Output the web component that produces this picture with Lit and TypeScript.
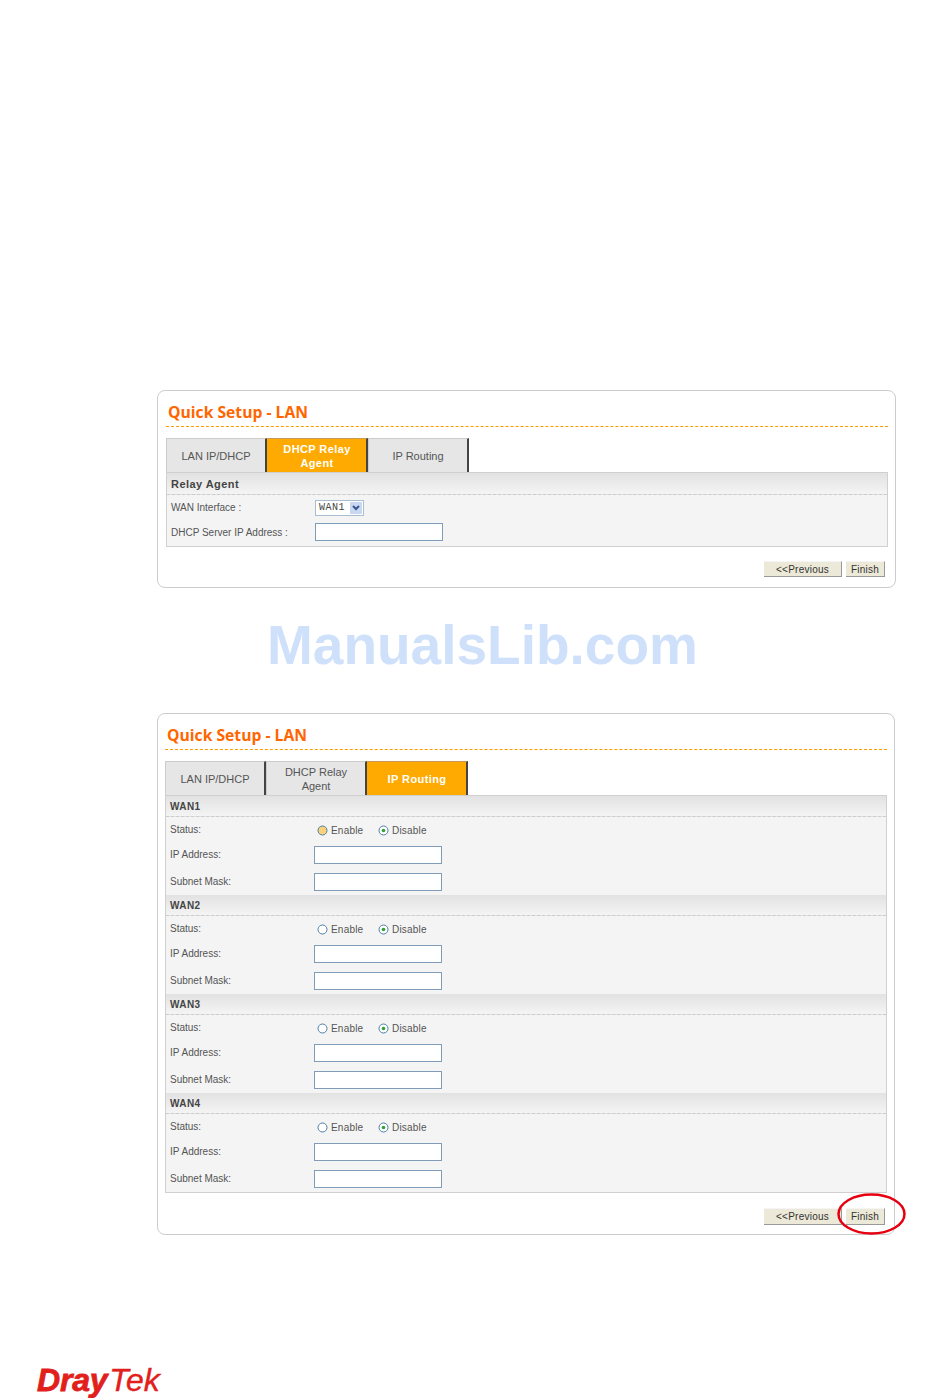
import { LitElement, html, css, svg } from "lit";
import { customElement, property } from "lit/decorators.js";

const TABS = ["LAN IP/DHCP", "DHCP Relay<br>Agent", "IP Routing"];

@customElement("setup-panel")
class SetupPanel extends LitElement {
  @property({ type: Number }) active = 0;
  @property({ type: Boolean }) routing = false;

  static styles = css`
    :host { display: block; position: relative; }
    .panel {
      box-sizing: border-box;
      border: 1px solid #ccc;
      border-radius: 8px;
      background: #fff;
      padding: 0 7px;
      font-family: "Liberation Sans", sans-serif;
      font-size: 10px;
      color: #555;
    }
    .title {
      font-family: "Open Sans", sans-serif;
      font-weight: 700;
      font-size: 15.7px;
      line-height: 26px;
      padding: 8px 0 1px 2px;
      color: #f60;
      border-bottom: 1px dashed #f90;
    }
    .tabs { display: flex; margin-top: 11px; }
    .tab {
      box-sizing: border-box;
      width: 101px;
      height: 34px;
      padding-top: 1px;
      display: flex;
      align-items: center;
      justify-content: center;
      text-align: center;
      font-size: 11px;
      line-height: 14px;
      background: #e6e6e6;
      color: #555;
      border-top: 1px solid #ccc;
      border-left: 1px solid #ccc;
      border-right: 2px solid #444;
    }
    .tab.on {
      background: #fa0;
      color: #fff;
      font-weight: 700;
      letter-spacing: 0.4px;
      border-top-color: #c89a55;
      border-left-color: #fa0;
    }
    .shift .title, .shift .tabs, .shift .box { margin-left: 1px; }
    .box {
      background: #f4f4f4;
      border: 1px solid #d0d0d0;
    }
    .head {
      box-sizing: border-box;
      height: 21px;
      line-height: 22px;
      padding-left: 4px;
      font-size: 10px;
      font-weight: 700;
      letter-spacing: 0.4px;
      color: #444;
      background: linear-gradient(#e2e2e2, #f4f4f4);
      border-bottom: 1px dashed #ccc;
    }
    .head.big { height: 22px; font-size: 11px; line-height: 23px; letter-spacing: 0.45px; }
    .row {
      display: grid;
      grid-template-columns: 144px 1fr;
      align-items: center;
      padding-left: 4px;
      box-sizing: border-box;
      color: #555;
    }
    .r24 { height: 24px; }
    .r25 { height: 25px; }
    .r26 { height: 26px; padding-bottom: 2px; }
    .r27 { height: 27px; }
    .field {
      box-sizing: border-box;
      display: block;
      width: 128px;
      height: 18px;
      border: 1px solid #7f9db9;
      background: #fff;
    }
    .select {
      box-sizing: border-box;
      width: 49px;
      height: 16px;
      border: 1px solid #a9bdd3;
      background: #fff;
      display: flex;
      align-items: center;
      justify-content: space-between;
      padding: 0 1px 0 3px;
      font-family: "Liberation Mono", monospace;
      font-size: 10px;
      letter-spacing: 0.5px;
      color: #444;
    }
    .arrow {
      width: 12px;
      height: 12px;
      background: #c9d8f0;
      display: flex;
      align-items: center;
      justify-content: center;
    }
    .radios { display: flex; align-items: center; padding: 3px 0 0 3px; letter-spacing: 0.2px; }
    .radio { display: flex; align-items: center; width: 61px; gap: 3px; }
    .radio svg { display: block; }
    .foot {
      display: flex;
      justify-content: flex-end;
      gap: 4px;
    }
    .btn {
      box-sizing: border-box;
      height: 100%;
      display: flex;
      align-items: center;
      justify-content: center;
      background: #ece9d8;
      border-right: 1px solid #999;
      border-bottom: 1px solid #999;
      border-top: 1px solid #f5f5f5;
      letter-spacing: 0.25px;
      color: #333;
    }
    .prev { width: 78px; }
    .finish { width: 39px; }
    .f1 { height: 16px; margin-top: 14px; padding: 0 3px 10px 0; }
    .f2 { height: 17px; margin-top: 15px; padding: 0 2px 9px 0; }
    .ring { position: absolute; right: -11px; bottom: 0; display: block; }
  `;

  radio(color: string, checked: boolean) {
    return html`<svg width="11" height="11" viewBox="0 0 11 11">
      <circle cx="5.5" cy="5.5" r="4.5" fill=${color} stroke="#4d7fa8" stroke-width="1"></circle>
      ${checked ? svg`<circle cx="5.5" cy="5.5" r="1.8" fill="#2fa52f"></circle>` : null}
    </svg>`;
  }

  section(name: string, hot: boolean) {
    return html`
      <div class="head">${name}</div>
      <div class="row r24">
        <span>Status:</span>
        <div class="radios">
          <label class="radio">${this.radio(hot ? "#fbd27a" : "#fff", false)}Enable</label>
          <label class="radio">${this.radio("#fff", true)}Disable</label>
        </div>
      </div>
      <div class="row r27"><span>IP Address:</span><span class="field"></span></div>
      <div class="row r27"><span>Subnet Mask:</span><span class="field"></span></div>
    `;
  }

  render() {
    const tabs = TABS.map((t, i) => {
      const [a, b] = t.split("<br>");
      return html`<div class="tab ${i === this.active ? "on" : ""}">
        <span>${a}${b ? html`<br />${b}` : ""}</span>
      </div>`;
    });
    return html`
      <div class="panel ${this.routing ? "routing" : "shift"}">
        <div class="title">Quick Setup - LAN</div>
        <div class="tabs">${tabs}</div>
        <div class="box">
          ${this.routing
            ? ["WAN1", "WAN2", "WAN3", "WAN4"].map((n, i) => this.section(n, i === 0))
            : html`
                <div class="head big">Relay Agent</div>
                <div class="row r25">
                  <span>WAN Interface :</span>
                  <div class="select">
                    <span>WAN1</span>
                    <span class="arrow">
                      <svg width="8" height="6" viewBox="0 0 8 6">
                        <path d="M1 1l3 3 3-3" fill="none" stroke="#35558f" stroke-width="2"></path>
                      </svg>
                    </span>
                  </div>
                </div>
                <div class="row r26"><span>DHCP Server IP Address :</span><span class="field"></span></div>
              `}
        </div>
        <div class="foot ${this.routing ? "f2" : "f1"}">
          <div class="btn prev">&lt;&lt;Previous</div>
          <div class="btn finish">Finish</div>
        </div>
      </div>
      ${this.routing
        ? html`<svg class="ring" width="69" height="42" viewBox="0 0 69 42">
            <ellipse cx="34.5" cy="21" rx="33" ry="19.5" fill="none" stroke="#e6000f" stroke-width="2.5"></ellipse>
          </svg>`
        : null}
    `;
  }
}

@customElement("app-root")
class AppRoot extends LitElement {
  static styles = css`
    :host { display: block; width: 950px; height: 1398px; background: #fff; overflow: hidden; }
    .page { display: flex; flex-direction: column; padding-top: 390px; }
    .p1 { margin-left: 157px; width: 739px; }
    .p2 { margin-left: 157px; width: 738px; }
    .mark {
      height: 125px;
      box-sizing: border-box;
      padding: 25px 0 0 267px;
      font-family: "Liberation Sans", sans-serif;
      font-weight: 700;
      font-size: 55px;
      line-height: 64px;
      color: #cfe1fa;
    }
    .logo {
      margin-top: 129px;
      margin-left: 37px;
      height: 33px;
      line-height: 33px;
      font-family: "Liberation Sans", sans-serif;
      font-style: italic;
      color: #e1201c;
      white-space: nowrap;
    }
    .dray { font-weight: 700; font-size: 32px; letter-spacing: -0.2px; -webkit-text-stroke: 0.8px #e1201c; }
    .tek { font-weight: 400; font-size: 32px; margin-left: 2px; -webkit-text-stroke: 0.4px #e1201c; }
  `;

  render() {
    return html`
      <div class="page">
        <setup-panel class="p1" active="1"></setup-panel>
        <div class="mark">ManualsLib.com</div>
        <setup-panel class="p2" active="2" routing></setup-panel>
        <div class="logo"><span class="dray">Dray</span><span class="tek">Tek</span></div>
      </div>
    `;
  }
}
